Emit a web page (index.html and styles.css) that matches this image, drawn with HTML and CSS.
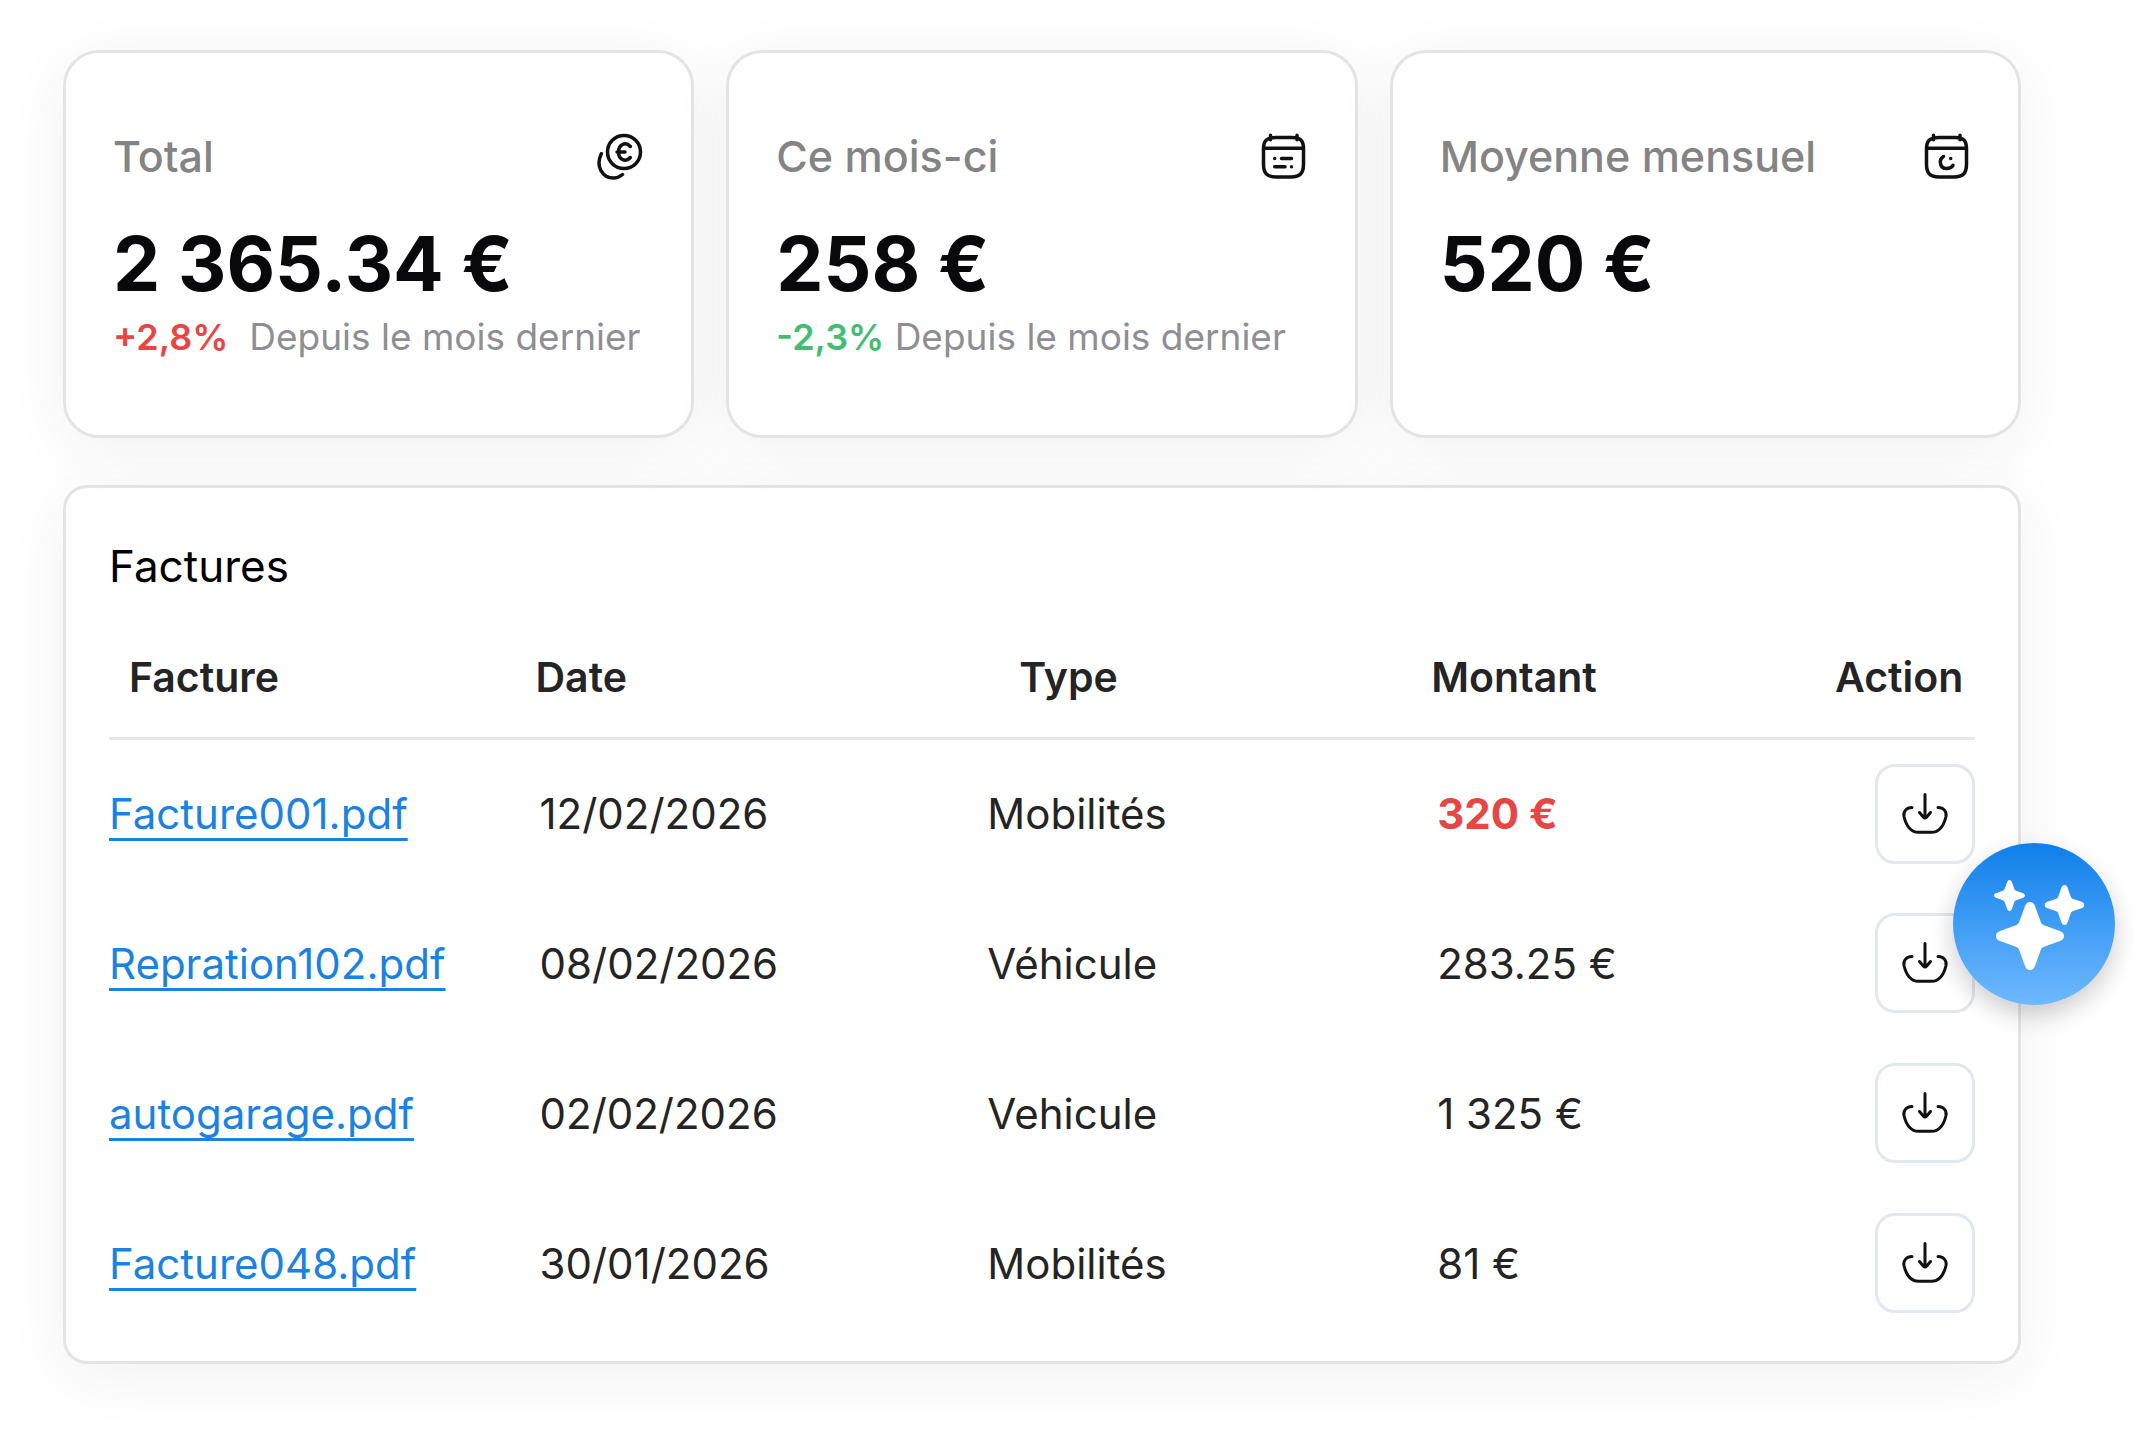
FILE: index.html
```html
<!DOCTYPE html>
<html lang="fr">
<head>
    <meta charset="UTF-8">
    <meta name="viewport" content="width=device-width, initial-scale=1.0">

    <title>Factures</title>

    <link rel="stylesheet" href="styles.css">
</head>
<body>

    <!-- formes partagées -->
    <svg class="sprites" aria-hidden="true">
        <symbol id="download" viewBox="0 0 48 48">
            <path d="M24 4.5V28M18.5 22.5l4 4.7q1.5 1.6 3 0l4-4.7"/>
            <path d="M11 17.5C5.500 17.500 2 21.500 3 26.500C5 35 9.500 42.300 17.500 42.300H30.500C38.500 42.300 43 35 45 26.500C46 21.500 42.500 17.500 37 17.500"/>
        </symbol>
        <symbol id="calendar" viewBox="0 0 48 48">
            <path d="M16 5.500H32C40.500 5.500 43.500 8.500 43.500 17V32C43.500 41.500 40 45 31 45H16C7 45 3.500 41.500 3.500 32V17C3.500 8.500 7 5.500 16 5.500ZM3.500 16.200H43.500M10.500 3.200V7.800M37 3.200V7.800"/>
        </symbol>
        <symbol id="star" viewBox="-34 -34 68 68">
            <path d="M0-34Q3.500-34 5-30L9.500-17.500Q11-13 12-12Q13-11 17.500-9.500L30-5Q34-3.500 34 0Q34 3.500 30 5L17.500 9.500Q13 11 12 12Q11 13 9.500 17.500L5 30Q3.500 34 0 34Q-3.500 34-5 30L-9.500 17.500Q-11 13-12 12Q-13 11-17.500 9.500L-30 5Q-34 3.500-34 0Q-34-3.500-30-5L-17.500-9.500Q-13-11-12-12Q-11-13-9.500-17.500L-5-30Q-3.500-34 0-34Z"/>
        </symbol>
    </svg>

    <main class="page">

        <section class="stats">
            <article class="stat">
                <div class="stat-head">
                    <h2>Total</h2>
                    <svg class="icon" viewBox="0 0 48 48">
                        <circle cx="28" cy="20" r="16.500"/>
                        <path d="M5.300 21.700C-1 35 7 46 17.500 46C21 46 24 44.500 26.500 42.500M34.300 14.500C30 9.500 22.500 12 22.500 20C22.500 28 30 30.500 34.300 25.500M21 20H29"/>
                    </svg>
                </div>
                <p class="stat-value">2 365.34 €</p>
                <p class="stat-note"><strong class="up">+2,8%</strong> &nbsp;Depuis le mois dernier</p>
            </article>

            <article class="stat">
                <div class="stat-head">
                    <h2>Ce mois-ci</h2>
                    <svg class="icon" viewBox="0 0 48 48">
                        <use href="#calendar"/>
                        <path d="M14.700 26.500V26.500M21.500 26.500H31.500M14.700 34.700H25M31.500 34.700V34.700"/>
                    </svg>
                </div>
                <p class="stat-value">258 €</p>
                <p class="stat-note"><strong class="down">-2,3%</strong> Depuis le mois dernier</p>
            </article>

            <article class="stat">
                <div class="stat-head">
                    <h2>Moyenne mensuel</h2>
                    <svg class="icon" viewBox="0 0 48 48">
                        <use href="#calendar"/>
                        <path d="M20.500 24.500C15.500 27.500 16.500 36.500 23.500 36.500C26.500 36.500 28.700 35.500 30 33.300M27.700 26.500V26.500"/>
                    </svg>
                </div>
                <p class="stat-value">520 €</p>
            </article>
        </section>

        <section class="invoices">
            <h2>Factures</h2>

            <table>
                <thead>
                    <tr>
                        <th class="col-file">Facture</th>
                        <th class="col-date">Date</th>
                        <th class="col-type">Type</th>
                        <th class="col-amount">Montant</th>
                        <th class="col-action">Action</th>
                    </tr>
                </thead>
                <tbody>
                    <tr>
                        <td><a href="#">Facture001.pdf</a></td>
                        <td>12/02/2026</td>
                        <td>Mobilités</td>
                        <td class="amount high">320 €</td>
                        <td><button type="button" class="download" aria-label="Télécharger"><svg class="icon"><use href="#download"/></svg></button></td>
                    </tr>
                    <tr>
                        <td><a href="#">Repration102.pdf</a></td>
                        <td>08/02/2026</td>
                        <td>Véhicule</td>
                        <td class="amount">283.25 €</td>
                        <td><button type="button" class="download" aria-label="Télécharger"><svg class="icon"><use href="#download"/></svg></button></td>
                    </tr>
                    <tr>
                        <td><a href="#">autogarage.pdf</a></td>
                        <td>02/02/2026</td>
                        <td>Vehicule</td>
                        <td class="amount">1 325 €</td>
                        <td><button type="button" class="download" aria-label="Télécharger"><svg class="icon"><use href="#download"/></svg></button></td>
                    </tr>
                    <tr>
                        <td><a href="#">Facture048.pdf</a></td>
                        <td>30/01/2026</td>
                        <td>Mobilités</td>
                        <td class="amount">81 €</td>
                        <td><button type="button" class="download" aria-label="Télécharger"><svg class="icon"><use href="#download"/></svg></button></td>
                    </tr>
                </tbody>
            </table>
        </section>

    </main>

    <button type="button" class="assistant" aria-label="Assistant">
        <svg viewBox="0 0 162 162">
            <use href="#star" x="43" y="59" width="68" height="68"/>
            <use href="#star" x="41" y="37" width="31" height="31"/>
            <use href="#star" x="91.500" y="42" width="40" height="40"/>
        </svg>
    </button>

</body>
</html>
```
FILE: styles.css
```css
* {
    box-sizing: border-box;
}
body {
    margin: 0;
    background-color: #fff;
    font-family: Inter, "Liberation Sans", sans-serif;
    color: #242424;
}
h2, p {
    margin: 0;
}
.sprites {
    display: none;
}
.page {
    padding: 50px 113px 75px 63px;
}
.icon {
    display: block;
    width: 48px;
    height: 48px;
    fill: none;
    stroke: #111;
    stroke-width: 3;
    stroke-linecap: round;
    stroke-linejoin: round;
}

/* cartes du haut */
.stats {
    display: grid;
    grid-template-columns: repeat(3, minmax(0, 1fr));
    gap: 32px;
    margin-bottom: 47px;
}
.stat, .invoices {
    background-color: #fff;
    border: 3px solid #e4e4e4;
    box-shadow: 0 12px 64px rgba(0, 0, 0, 0.06);
}
.stat {
    min-height: 388px;
    padding: 77px 47px 60px;
    border-radius: 36px;
    white-space: nowrap;
}
.stat-head {
    display: flex;
    justify-content: space-between;
    align-items: center;
    height: 52px;
}
.stat-head h2 {
    font-size: 43px;
    font-weight: 500;
    color: #848484;
}
.stat-head .icon {
    stroke-width: 3.5;
}
.stat-value {
    margin-top: 37px;
    font-size: 75px;
    font-weight: 700;
    line-height: 90px;
    color: #09090b;
}
.stat-note {
    font-size: 37px;
    line-height: 56px;
    color: #8e8e93;
}
.stat-note strong {
    font-size: 36px;
    font-weight: 600;
}
.stat-note .up {
    color: #e84545;
}
.stat-note .down {
    color: #42bd74;
}

/* liste des factures */
.invoices {
    padding: 50px 43px 23px;
    border-radius: 24px;
}
.invoices h2 {
    font-size: 44px;
    font-weight: 400;
    line-height: 56px;
    color: #000;
}
table {
    width: 100%;
    margin-top: 24px;
    table-layout: fixed;
    border-collapse: collapse;
}
th {
    height: 120px;
    padding: 0 0 0 20px;
    border-bottom: 3px solid #e8e8e8;
    font-size: 41px;
    font-weight: 600;
    text-align: left;
}
td {
    height: 150px;
    padding: 0 0 0 20px;
    font-size: 42px;
}
td:first-child {
    padding-left: 0;
}
td:last-child {
    padding-left: 0;
}
.col-file {
    width: 22%;
}
.col-date, .col-type {
    width: 24%;
}
.col-date, .col-amount {
    padding-left: 16px;
}
.col-type {
    padding-left: 52px;
}
.col-action {
    width: 160px;
}
.amount {
    padding-left: 22px;
}
td a {
    color: #1b82e0;
    text-decoration: underline;
    text-decoration-thickness: 3px;
    text-underline-offset: 9px;
    text-decoration-skip-ink: none;
}
.high {
    font-weight: 700;
    color: #e84545;
}
.download {
    display: flex;
    align-items: center;
    justify-content: center;
    width: 100px;
    height: 100px;
    margin-left: auto;
    padding: 0;
    background-color: #fff;
    border: 3px solid #e2e8f0;
    border-radius: 20px;
}

/* bouton flottant */
.assistant {
    position: fixed;
    top: 843px;
    right: 19px;
    width: 162px;
    height: 162px;
    padding: 0;
    border: none;
    border-radius: 50%;
    background: linear-gradient(#0f7fea, #6fb9ff);
    box-shadow: 0 10px 24px rgba(0, 0, 0, 0.2);
}
.assistant svg {
    display: block;
    width: 100%;
    height: 100%;
    fill: #fff;
}
```
